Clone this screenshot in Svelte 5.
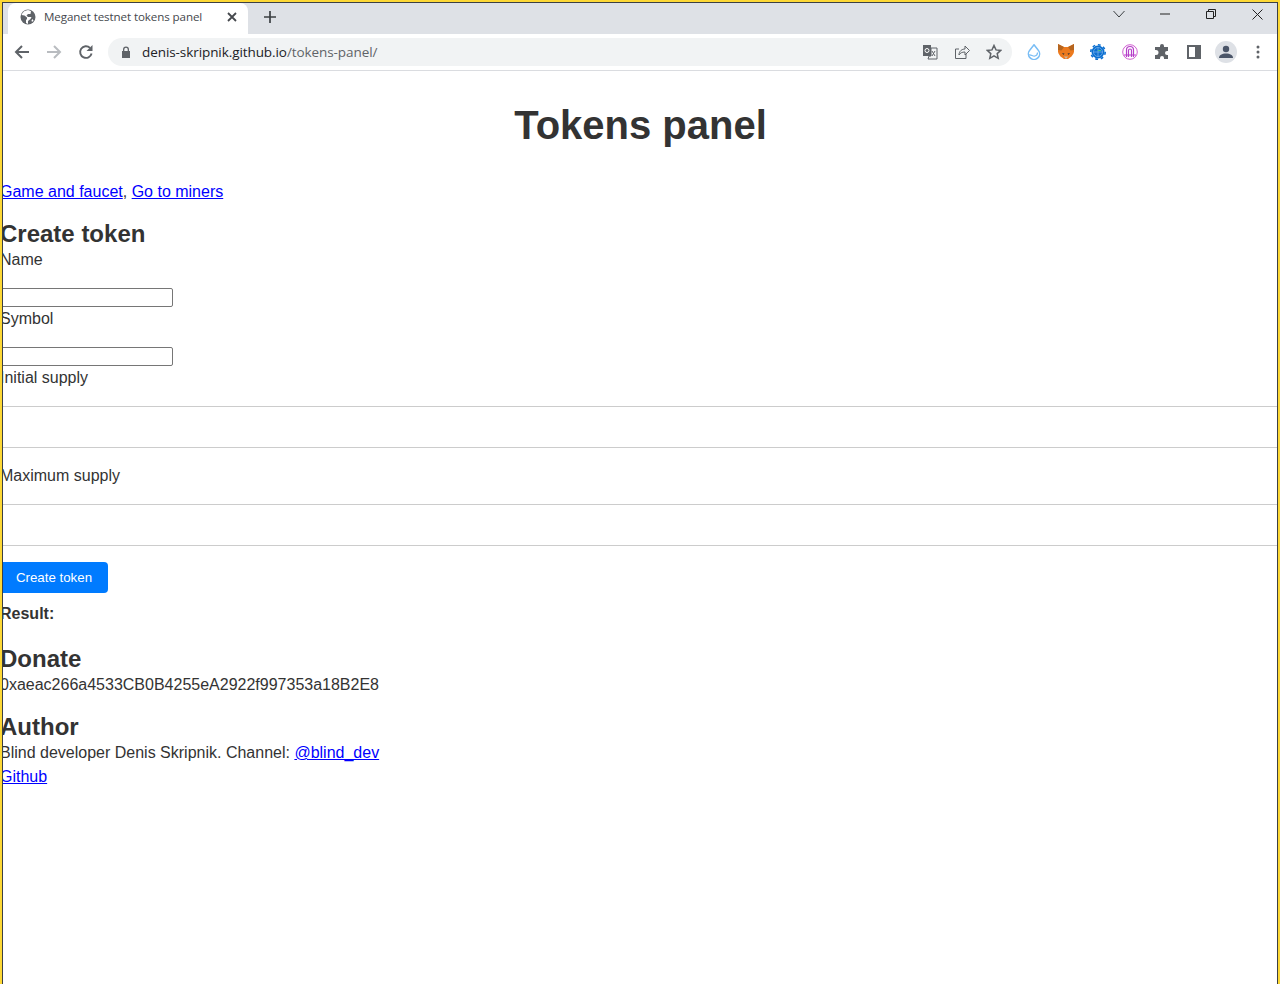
<script>
  const fields = ['Initial supply', 'Maximum supply'];
</script>

<div class="window">
  <div class="frame">
    <div class="tabstrip">
      <div class="tab">
        <svg class="favicon" viewBox="0 0 16 16" width="16" height="16">
          <circle cx="8" cy="8" r="7.500" fill="#5f6368" />
          <path d="M1.500 6l3 .5 2.500 2v1.500l-1 1v3l2 1V12l2.500-2 1-2H8L6.500 6.500 8 5h2.500l.5-3-3-1-3.500 1-2 2z" fill="#fff" />
          <path d="M12.500 10l1 1.500-1.500 1.500-.5-1.500z" fill="#fff" />
        </svg>
        <span class="tab-title">Meganet testnet tokens panel</span>
        <svg class="tab-close" viewBox="0 0 10 10" width="10" height="10">
          <path d="M1 1l8 8M9 1l-8 8" stroke="#45484d" stroke-width="1.800" fill="none" />
        </svg>
      </div>
      <svg class="new-tab" viewBox="0 0 12 12" width="12" height="12">
        <path d="M6 0v12M0 6h12" stroke="#3c4043" stroke-width="1.700" fill="none" />
      </svg>
      <div class="window-controls">
        <svg class="chevron" viewBox="0 0 12 8" width="12" height="8"><path d="M.5 1l5.500 6 5.500-6" stroke="#3c4043" fill="none" /></svg>
        <svg viewBox="0 0 10 2" width="10" height="2"><path d="M0 1h10" stroke="#222" /></svg>
        <svg viewBox="0 0 10 10" width="10" height="10"><path d="M.5 2.500h7v7h-7zM2.500 2.500v-2h7v7h-2" stroke="#222" fill="none" /></svg>
        <svg viewBox="0 0 11 11" width="11" height="11"><path d="M.5.5l10 10M10.500.5l-10 10" stroke="#222" fill="none" /></svg>
      </div>
    </div>

    <div class="toolbar">
      <svg viewBox="0 0 16 16" width="16" height="16"><path d="M15 8H2M8 2L2 8l6 6" stroke="#5f6368" stroke-width="2" fill="none" /></svg>
      <svg viewBox="0 0 16 16" width="16" height="16"><path d="M1 8h13M8 2l6 6-6 6" stroke="#b9bcc0" stroke-width="2" fill="none" /></svg>
      <svg viewBox="0 0 16 16" width="16" height="16">
        <path d="M13.600 9.500A5.800 5.800 0 1 1 12 3.900" stroke="#5f6368" stroke-width="1.900" fill="none" />
        <path d="M14.500 1v6h-6z" fill="#5f6368" />
      </svg>
      <div class="omnibox">
        <svg viewBox="0 0 10 12" width="10" height="12"><path d="M2 5V3.500a3 3 0 0 1 6 0V5h1v7H1V5zm1.300 0h3.400V3.500a1.700 1.700 0 0 0-3.400 0z" fill="#5f6368" /></svg>
        <span class="url"><span class="host">denis-skripnik.github.io</span>/tokens-panel/</span>
        <div class="omni-icons">
          <svg viewBox="0 0 16 16" width="16" height="16">
            <path d="M1 1h8v11H1z" fill="#5f6368" />
            <path d="M9 4h6v11H6l1-3h2z" fill="none" stroke="#5f6368" />
            <circle cx="5" cy="6.500" r="2" fill="none" stroke="#fff" />
            <path d="M10 7l3 5M13 7l-3 5" stroke="#5f6368" />
          </svg>
          <svg viewBox="0 0 16 16" width="16" height="16">
            <path d="M12 10v4.500H1.500V5H5" stroke="#5f6368" fill="none" />
            <path d="M5 11c0-4 3-6 6-6V2l4.500 4.500L11 11V8c-3 0-5 1-6 3z" stroke="#5f6368" fill="none" />
          </svg>
          <svg viewBox="0 0 16 16" width="16" height="16">
            <path d="M8 1.500l2 4.400 4.800.5-3.600 3.200 1 4.700L8 11.900l-4.200 2.400 1-4.700L1.200 6.400 6 5.900z" stroke="#5f6368" stroke-width="1.500" fill="none" />
          </svg>
        </div>
      </div>
      <div class="extensions">
        <span class="slot">
          <svg viewBox="0 0 16 16" width="16" height="16">
            <path d="M8 .8l4.300 5.400a5.600 5.600 0 1 1-8.600 0z" fill="none" stroke="#78bdf5" stroke-width="1.500" />
            <path d="M3 11c2.500-.5 3.500 1.500 6 1s2.500-2 2.500-3.500" fill="none" stroke="#78bdf5" stroke-width="1.200" />
          </svg>
        </span>
        <span class="slot">
          <svg viewBox="0 0 16 16" width="16" height="16">
            <path d="M0 0l6 3h4l6-3 .5 6-1 3.500-2 3L10 15H6l-3.500-2.500-2-3L-.5 6z" fill="#ec7a1e" />
            <path d="M0 0l6 3-2.500 3.500L-.5 6zM16 0l-6 3 2.500 3.500L16.500 6z" fill="#b5651f" />
            <path d="M6 12.500l2 2.500 2-2.500z" fill="#c9b8a8" />
            <path d="M4 9l2.500.5L5.500 11zM12 9l-2.500.5 1 1.500z" fill="#3a3a3a" />
          </svg>
        </span>
        <span class="slot">
          <svg viewBox="0 0 16 16" width="16" height="16">
            <circle cx="8" cy="8" r="6.500" fill="#0b6fd0" />
            <circle cx="8" cy="8" r="7.200" fill="none" stroke="#0b6fd0" stroke-width="1.600" stroke-dasharray="2.800 2.800" />
            <circle cx="8" cy="8" r="4.500" fill="none" stroke="#7fb6ec" stroke-width=".7" />
            <path d="M3.500 8h9M8 3.500v9" stroke="#7fb6ec" stroke-width=".7" />
            <path d="M8 6.500h3" stroke="#4cc38a" stroke-width="1" />
          </svg>
        </span>
        <span class="slot">
          <svg viewBox="0 0 16 16" width="16" height="16">
            <circle cx="8" cy="8" r="7.300" fill="none" stroke="#d05fd0" />
            <path d="M4.500 13V6a3.500 3.500 0 0 1 7 0v7M6.500 13V6.500a1.500 1.500 0 0 1 3 0V13M2 11h12" fill="none" stroke="#b63fc9" stroke-width="1.200" />
          </svg>
        </span>
        <span class="slot">
          <svg viewBox="0 0 16 16" width="16" height="16">
            <path d="M6 2a2 2 0 0 1 4 0v1h4v4h-1a2 2 0 0 0 0 4h1v4h-4v-1a2 2 0 0 0-4 0v1H1v-4h1a2 2 0 0 0 0-5H1V3h5z" fill="#5f6368" />
          </svg>
        </span>
        <span class="slot">
          <svg viewBox="0 0 14 14" width="14" height="14">
            <path d="M0 0h14v14H0zM2 2v10h6V2z" fill="#5f6368" fill-rule="evenodd" />
          </svg>
        </span>
        <span class="slot">
          <span class="avatar">
            <svg viewBox="0 0 14 14" width="14" height="14">
              <circle cx="7" cy="4" r="3.200" fill="#4a5568" />
              <path d="M0 13c0-3 3-4.500 7-4.500s7 1.500 7 4.500z" fill="#4a5568" />
            </svg>
          </span>
        </span>
        <span class="slot">
          <svg viewBox="0 0 4 14" width="4" height="14">
            <circle cx="2" cy="2" r="1.500" fill="#5f6368" />
            <circle cx="2" cy="7" r="1.500" fill="#5f6368" />
            <circle cx="2" cy="12" r="1.500" fill="#5f6368" />
          </svg>
        </span>
      </div>
    </div>

    <main class="page">
      <div class="content">
        <h1>Tokens panel</h1>
        <p class="links"><a href="#game">Game and faucet</a>, <a href="#miners">Go to miners</a></p>

        <h2 class="create-heading">Create token</h2>
        <label class="short">Name<input type="text" /></label>
        <label class="short">Symbol<input type="text" /></label>
        {#each fields as field}
          <label class="wide">{field}<input type="text" /></label>
        {/each}

        <button type="button">Create token</button>
        <p class="result"><strong>Result:</strong></p>

        <h2 class="donate">Donate</h2>
        <p>0xaeac266a4533CB0B4255eA2922f997353a18B2E8</p>

        <h2 class="author">Author</h2>
        <p>Blind developer Denis Skripnik. Channel: <a href="#dev">@blind_dev</a></p>
        <p><a href="#github">Github</a></p>
      </div>
    </main>
  </div>
</div>

<style>
  :global(body) {
    margin: 0;
    background: #fff;
  }

  .window {
    box-sizing: border-box;
    height: 984px;
    overflow: hidden;
    border: solid #fdd835;
    border-width: 2px 2px 0;
    font-family: "Liberation Sans", Arial, sans-serif;
  }

  .frame {
    box-sizing: border-box;
    height: 100%;
    border: solid #3c4043;
    border-width: 1px 1px 0;
    display: flex;
    flex-direction: column;
  }

  .tabstrip {
    flex: none;
    height: 31px;
    background: #dee1e6;
    display: flex;
    align-items: center;
    padding-left: 5px;
  }

  .tab {
    align-self: stretch;
    box-sizing: border-box;
    width: 240px;
    background: #fff;
    border-radius: 8px 8px 0 0;
    display: flex;
    align-items: center;
    padding: 0 8px 3px 12px;
    gap: 8px;
  }

  .tab-title {
    flex: 1;
    margin-bottom: 2px;
    font-family: "Open Sans", sans-serif;
    font-size: 11.600px;
    color: #45484d;
    white-space: nowrap;
    letter-spacing: -0.1px;
  }

  .tab-close {
    margin-right: 3px;
  }

  .new-tab {
    margin: 0 0 3px 16px;
  }

  .window-controls {
    margin-left: auto;
    display: flex;
    align-items: center;
    gap: 36px;
    padding: 0 14px 9px 0;
  }

  .chevron {
    margin-right: -1px;
  }

  .toolbar {
    flex: none;
    box-sizing: border-box;
    height: 37px;
    background: #fff;
    border-bottom: 1px solid #dadce0;
    display: flex;
    align-items: center;
    padding-left: 11px;
    gap: 16px;
  }

  .omnibox {
    box-sizing: border-box;
    width: 904px;
    height: 28px;
    margin-left: -2px;
    background: #f1f3f4;
    border-radius: 14px;
    display: flex;
    align-items: center;
    padding: 0 10px 0 13px;
    gap: 11px;
  }

  .url {
    flex: 1;
    font-family: "Open Sans", sans-serif;
    font-size: 13.500px;
    color: #5f6368;
    letter-spacing: -0.08px;
  }

  .host {
    color: #202124;
  }

  .omni-icons {
    display: flex;
    gap: 16px;
  }

  .extensions {
    display: flex;
    align-items: center;
    margin-left: -10px;
  }

  .slot {
    width: 32px;
    display: flex;
    align-items: center;
    justify-content: center;
  }

  .avatar {
    width: 22px;
    height: 22px;
    border-radius: 50%;
    background: #dee1e6;
    display: flex;
    align-items: center;
    justify-content: center;
  }

  .page {
    flex: 1;
    overflow: hidden;
    color: #333;
    font-size: 16px;
    line-height: 24px;
  }

  .content {
    margin-left: -3px;
  }

  h1 {
    margin: 19px 0 0;
    padding-left: 4px;
    font-size: 40px;
    line-height: 70px;
    text-align: center;
  }

  p {
    margin: 0;
  }

  .links {
    margin-top: 20px;
  }

  a {
    color: #00f;
  }

  h2 {
    font-size: 24px;
    line-height: 26px;
  }

  .create-heading {
    margin: 17px 0 4px;
  }

  .donate {
    margin: 20px 0 1px;
  }

  .author {
    margin: 17px 0 1px;
  }

  label {
    display: block;
    line-height: 18px;
  }

  .short input {
    display: block;
    box-sizing: border-box;
    width: 173px;
    height: 19px;
    margin: 19px 0 0;
    padding: 0;
    border: 1px solid #767676;
    border-radius: 2px;
  }

  .short + .short,
  .short + .wide {
    margin-top: 3px;
  }

  .wide input {
    display: block;
    box-sizing: border-box;
    width: 100%;
    height: 42px;
    margin: 19px 0;
    padding: 0;
    border: solid #ccc;
    border-width: 1px 0;
    background: #fff;
  }

  button {
    display: block;
    box-sizing: border-box;
    width: 108px;
    height: 31px;
    margin-top: -3px;
    padding: 0;
    border: 0;
    border-radius: 4px;
    background: #007bff;
    color: #fff;
    font: 13.300px "Liberation Sans", Arial, sans-serif;
    text-align: center;
  }

  .result {
    margin-top: 9px;
  }
</style>
